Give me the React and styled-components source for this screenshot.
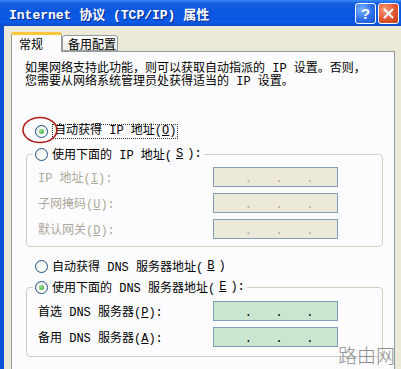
import React from 'react'
import styled, { createGlobalStyle } from 'styled-components'

const Global = createGlobalStyle`
  html, body { margin: 0; padding: 0; background: #ECE9D8; }
  #root { width: 401px; height: 369px; overflow: hidden; }
`

const FONT = `"Liberation Mono", "Noto Sans CJK SC", monospace`

const Window = styled.div`
  position: relative;
  width: 401px;
  height: 369px;
  display: flex;
  flex-direction: column;
  background: #ECE9D8;
  font-family: ${FONT};
  font-size: 12px;
  color: #000;
  overflow: hidden;
`

const TitleBar = styled.div`
  height: 26px;
  flex: none;
  display: flex;
  align-items: center;
  padding: 0 2px 0 9px;
  background: linear-gradient(#3C8CF4 0%, #1660E2 12%, #0A56E0 45%, #0B5AE6 85%, #0A4CCB 100%);
`

const Title = styled.div`
  flex: 1;
  color: #fff;
  font-weight: bold;
  font-size: 13px;
  text-shadow: 1px 1px #0B2A8C;
  white-space: nowrap;
`

const TitleButton = styled.div`
  width: 21px;
  height: 21px;
  box-sizing: border-box;
  margin-left: 2px;
  border: 1px solid #fff;
  border-radius: 3px;
  display: flex;
  align-items: center;
  justify-content: center;
  color: #fff;
  font-family: "Liberation Sans", sans-serif;
  font-weight: bold;
  font-size: 15px;
  background: ${p => p.$close
    ? 'radial-gradient(circle at 30% 30%, #F39A7A, #E0552F 55%, #C23A18)'
    : 'radial-gradient(circle at 30% 30%, #7FB2FF, #2A6FEA 55%, #1D55D0)'};
`

const Frame = styled.div`
  flex: 1;
  display: flex;
  flex-direction: column;
  border-left: 4px solid #0A50D8;
  padding: 0 6px 0 7px;
`

const TabRow = styled.div`
  height: 25px;
  flex: none;
  display: flex;
  align-items: flex-end;
`

const Tab = styled.div`
  position: relative;
  z-index: ${p => (p.$active ? 2 : 0)};
  box-sizing: border-box;
  height: ${p => (p.$active ? '20px' : '16px')};
  margin-bottom: ${p => (p.$active ? '-1px' : '0')};
  width: ${p => p.$w}px;
  padding-left: ${p => p.$pl}px;
  display: flex;
  align-items: center;
  font-family: "Noto Sans CJK SC", sans-serif;
  font-size: 12px;
  border: 1px solid #919B9C;
  border-bottom: ${p => (p.$active ? 'none' : '1px solid #919B9C')};
  border-top: ${p => (p.$active ? '3px solid #FFC83C' : '1px solid #919B9C')};
  border-radius: 3px 3px 0 0;
  background: ${p => (p.$active ? '#FCFCFE' : 'linear-gradient(#FFFFFF, #ECEBE6)')};
`

const Panel = styled.div`
  flex: 1;
  background: #FCFCFE;
  border: 1px solid #919B9C;
  border-bottom: none;
  padding: 11px 11px 0 13px;
`

const Intro = styled.p`
  margin: 0;
  line-height: 13px;
  white-space: nowrap;
`

const RadioRow = styled.div`
  position: relative;
  display: flex;
  align-items: center;
  height: 16px;
  margin-top: ${p => p.$mt || 0}px;
  padding-left: ${p => p.$pl ?? 10}px;
  gap: 4px;
  white-space: nowrap;
`

const RadioCircle = styled.span`
  width: 13px;
  height: 13px;
  box-sizing: border-box;
  border-radius: 50%;
  border: 1px solid #1C5180;
  background: radial-gradient(circle at 65% 65%, #FFFFFF 20%, #E3E2DA 100%);
  display: flex;
  align-items: center;
  justify-content: center;
  flex: none;
  &::after {
    content: '';
    display: ${p => (p.$checked ? 'block' : 'none')};
    width: 5px;
    height: 5px;
    border-radius: 50%;
    background: radial-gradient(circle at 35% 35%, #9BE29B, #21A121);
  }
`

const Focus = styled.span`
  border: 1px dotted #333;
  padding: 0 1px;
  line-height: 13px;
`

const Mark = styled.svg`
  position: absolute;
  left: -3px;
  top: -7px;
  overflow: visible;
`

const Group = styled.fieldset`
  margin: ${p => p.$mt}px 0 0 1px;
  padding: 0;
  border: 1px solid #D0D0BF;
  border-radius: 4px;
`

const Legend = styled.legend`
  margin-left: 6px;
  padding: 0 2px 0 0;
  background: #FCFCFE;
`

const FieldGrid = styled.div`
  display: grid;
  grid-template-columns: 175px 125px;
  row-gap: ${p => p.$gap}px;
  padding: ${p => p.$pt}px 0 ${p => p.$pb}px 11px;
  align-items: center;
`

const Label = styled.span`
  color: ${p => (p.$disabled ? '#ACA899' : '#000')};
  white-space: nowrap;
`

const IpBox = styled.div`
  box-sizing: border-box;
  height: 20px;
  border: 1px solid #7F9DB9;
  background: ${p => (p.$disabled ? '#ECE9D8' : '#C8E6D0')};
  display: flex;
  align-items: center;
  padding-left: 3px;
  color: ${p => (p.$disabled ? '#ACA899' : '#000')};
`

const Seg = styled.span`
  width: 28px;
`

const Dot = styled.span`
  width: 3px;
  text-align: center;
  font-size: 12px;
  line-height: 12px;
  margin-top: 3px;
`

const Watermark = styled.div`
  position: absolute;
  right: 6px;
  bottom: 4px;
  font-family: "Noto Sans CJK SC", sans-serif;
  font-weight: 300;
  font-size: 19px;
  line-height: 20px;
  color: #8C8C8C;
  letter-spacing: 0;
`

const Ip = ({ disabled }) => (
  <IpBox $disabled={disabled}>
    <Seg /><Dot>.</Dot><Seg /><Dot>.</Dot><Seg /><Dot>.</Dot><Seg />
  </IpBox>
)

const Radio = ({ checked, children, mt, pl, mark }) => (
  <RadioRow $mt={mt} $pl={pl}>
    {mark && (
      <Mark width="36" height="28" viewBox="0 0 36 28">
        <ellipse cx="18" cy="14" rx="17" ry="12.5" fill="none" stroke="#B3211C" strokeWidth="1.6" />
      </Mark>
    )}
    <RadioCircle $checked={checked} />
    {children}
  </RadioRow>
)

export default function App() {
  return (
    <>
      <Global />
      <Window>
        <TitleBar>
          <Title>Internet 协议 (TCP/IP) 属性</Title>
          <TitleButton>?</TitleButton>
          <TitleButton $close>
            <svg width="11" height="11" viewBox="0 0 11 11">
              <path d="M1.5 1.5 L9.5 9.5 M9.5 1.5 L1.5 9.5" stroke="#fff" strokeWidth="2" strokeLinecap="round" />
            </svg>
          </TitleButton>
        </TitleBar>
        <Frame>
          <TabRow>
            <Tab $active $w={51} $pl={7}>常规</Tab>
            <Tab $w={56} $pl={5}>备用配置</Tab>
          </TabRow>
          <Panel>
            <Intro>
              如果网络支持此功能，则可以获取自动指派的 IP 设置。否则，<br />
              您需要从网络系统管理员处获得适当的 IP 设置。
            </Intro>
            <Radio checked mt={34} mark>
              <Focus>自动获得 IP 地址(<u>O</u>)</Focus>
            </Radio>
            <Group $mt={7}>
              <Legend>
                <Radio pl={2}>使用下面的 IP 地址(<u>S</u>):</Radio>
              </Legend>
              <FieldGrid $gap={6} $pt={5} $pb={7}>
                <Label $disabled>IP 地址(<u>I</u>):</Label>
                <Ip disabled />
                <Label $disabled>子网掩码(<u>U</u>):</Label>
                <Ip disabled />
                <Label $disabled>默认网关(<u>D</u>):</Label>
                <Ip disabled />
              </FieldGrid>
            </Group>
            <Radio mt={11}>自动获得 DNS 服务器地址(<u>B</u>)</Radio>
            <Group $mt={5}>
              <Legend>
                <Radio checked pl={2}>使用下面的 DNS 服务器地址(<u>E</u>):</Radio>
              </Legend>
              <FieldGrid $gap={6} $pt={6} $pb={9}>
                <Label>首选 DNS 服务器(<u>P</u>):</Label>
                <Ip />
                <Label>备用 DNS 服务器(<u>A</u>):</Label>
                <Ip />
              </FieldGrid>
            </Group>
          </Panel>
        </Frame>
        <Watermark>路由网</Watermark>
      </Window>
    </>
  )
}
